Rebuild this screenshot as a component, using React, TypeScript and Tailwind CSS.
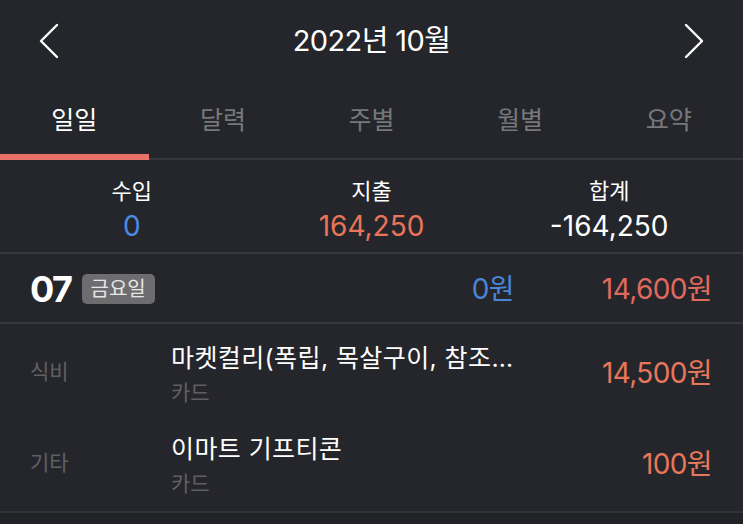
import * as React from "react";

const tabs = ["일일", "달력", "주별", "월별", "요약"];

const items = [
  { category: "식비", title: "마켓컬리(폭립, 목살구이, 참조…", method: "카드", amount: "14,500원" },
  { category: "기타", title: "이마트 기프티콘", method: "카드", amount: "100원" },
];

function Chevron({ dir }: { dir: "left" | "right" }) {
  return (
    <svg width="20" height="36" viewBox="0 0 20 36" fill="none" aria-hidden="true">
      <path
        d={dir === "left" ? "M18 2 L2 18 L18 34" : "M2 2 L18 18 L2 34"}
        stroke="#ffffff"
        strokeWidth="2.4"
        strokeLinecap="round"
        strokeLinejoin="round"
      />
    </svg>
  );
}

export default function App() {
  return (
    <div
      className="w-[743px] h-[524px] overflow-hidden bg-[#25262b] text-white"
      style={{ fontFamily: '"Inter", "Noto Sans CJK KR", sans-serif' }}
    >
      {/* Header */}
      <header className="flex h-[86px] items-center justify-between px-[39px] pb-[4px]">
        <Chevron dir="left" />
        <h1 className="text-[29px] tracking-[-0.6px]">2022년 10월</h1>
        <Chevron dir="right" />
      </header>

      {/* Tabs */}
      <nav className="flex h-[74px] border-b-2 border-[#37383d]">
        {tabs.map((t, i) => (
          <div
            key={t}
            className={
              i === 0
                ? "relative flex flex-1 items-center justify-center pb-[3px] text-[25px] text-white"
                : "flex flex-1 items-center justify-center pb-[3px] text-[25px] text-[#77787c]"
            }
          >
            {t}
            {i === 0 && (
              <span className="absolute -bottom-[2px] left-0 h-[6px] w-full bg-[#e8716a]" />
            )}
          </div>
        ))}
      </nav>

      {/* Summary */}
      <section className="grid h-[94px] grid-cols-3 border-b-2 border-[#37383d] pt-[14px]">
        <div className="flex flex-col items-center translate-x-[8px]">
          <span className="text-[22px] leading-[34px]">수입</span>
          <span className="text-[28px] leading-[36px] text-[#4a8ae3]">0</span>
        </div>
        <div className="flex flex-col items-center">
          <span className="text-[22px] leading-[34px]">지출</span>
          <span className="text-[28px] leading-[36px] text-[#ea7558]">164,250</span>
        </div>
        <div className="flex flex-col items-center -translate-x-[10px]">
          <span className="text-[22px] leading-[34px]">합계</span>
          <span className="text-[28px] leading-[36px]">-164,250</span>
        </div>
      </section>

      {/* Day header */}
      <div className="flex h-[70px] items-center border-b-2 border-[#37383d] pl-[30px] pr-[31px] pt-[2px]">
        <span className="text-[36px] font-bold tracking-[-1.5px]">07</span>
        <span className="ml-[10px] rounded-[5px] bg-[#6d6d70] px-[9px] py-[1px] text-[20px] leading-[28px] text-[#e6e6e6]">
          금요일
        </span>
        <span className="ml-auto text-[28px] tracking-[-0.6px] text-[#4a85d8]">0원</span>
        <span className="ml-[88px] text-[28px] tracking-[-0.6px] text-[#e06a5e]">14,600원</span>
      </div>

      {/* Items */}
      <ul className="border-b-2 border-[#323338] pt-[5px]">
        {items.map((it) => (
          <li key={it.category} className="flex h-[91px] items-center pl-[30px] pr-[31px]">
            <span className="w-[141px] pb-[5px] text-[21px] text-[#5f6064]">{it.category}</span>
            <div className="flex w-[360px] flex-col">
              <span className="truncate text-[25px] leading-[36px] tracking-[0.4px]">{it.title}</span>
              <span className="text-[21px] leading-[34px] text-[#5f6064]">{it.method}</span>
            </div>
            <span className="ml-auto pb-[3px] text-[28px] tracking-[-0.6px] text-[#e8775a]">{it.amount}</span>
          </li>
        ))}
      </ul>
      <div className="h-[20px] bg-[#222327]" />
    </div>
  );
}
